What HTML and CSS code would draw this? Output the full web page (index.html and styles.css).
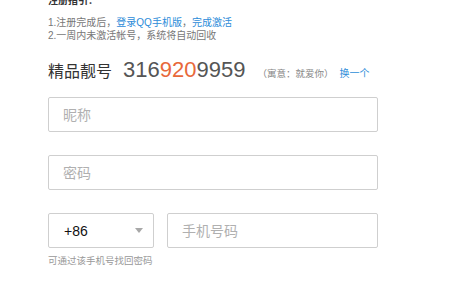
FILE: index.html
```html
<!DOCTYPE html>
<html lang="zh-CN">
<head>
    <meta charset="UTF-8">
    <title>注册</title>
    <link rel="stylesheet" href="styles.css">
</head>
<body>

    <div class="guide">
        <h3>注册指引：</h3>
        <p>1.注册完成后，<a href="#">登录QQ手机版</a>，<a href="#">完成激活</a></p>
        <p>2.一周内未激活帐号，系统将自动回收</p>
    </div>

    <div class="lucky">
        <span class="lucky-title">精品靓号</span>
        <span class="lucky-num">316<em>920</em>9959</span>
        <span class="lucky-tip">（寓意：就爱你）</span>
        <a href="#" class="lucky-change">换一个</a>
    </div>

    <div class="field">
        <input type="text" placeholder="昵称">
    </div>

    <div class="field">
        <input type="password" placeholder="密码">
    </div>

    <div class="field phone">
        <div class="select">
            <span>+86</span>
            <i class="arrow"></i>
        </div>
        <input type="text" class="phone-input" placeholder="手机号码">
    </div>
    <p class="hint">可通过该手机号找回密码</p>

</body>
</html>
```

FILE: styles.css
```css
body {
    font-family: "Liberation Sans", "Noto Sans CJK SC", sans-serif;
    margin: 0;
    padding-left: 48px;
    background: #fff;
    color: #333;
}

a {
    color: #2d8cd9;
    text-decoration: none;
}

.guide {
    margin-top: -6px;
    font-size: 10px;
    line-height: 13px;
    color: #777;
}

.guide h3 {
    margin: 0 0 9px;
    font-size: 10px;
    font-weight: bold;
    color: #333;
}

.guide p {
    margin: 0;
}

.lucky {
    display: flex;
    align-items: baseline;
    margin-top: 15px;
    height: 24px;
}

.lucky-title {
    font-size: 16px;
    color: #333;
}

.lucky-num {
    margin-left: 11px;
    font-size: 22px;
    color: #555;
}

.lucky-num em {
    font-style: normal;
    color: #e8683a;
}

.lucky-tip {
    margin-left: 12px;
    font-size: 9.5px;
    color: #888;
}

.lucky-change {
    margin-left: 6px;
    font-size: 10px;
}

.field {
    margin-top: 16px;
    width: 330px;
}

.field + .field {
    margin-top: 23px;
}

.field input {
    box-sizing: border-box;
    width: 100%;
    height: 35px;
    padding: 0 14px;
    border: 1px solid #cfcfcf;
    border-radius: 2px;
    font-family: inherit;
    font-size: 14px;
    color: #333;
    outline: none;
}

.field input::placeholder {
    color: #b0b0b0;
}

.phone {
    display: flex;
    gap: 13px;
}

.select {
    box-sizing: border-box;
    flex: 0 0 106px;
    height: 35px;
    display: flex;
    align-items: center;
    justify-content: space-between;
    padding: 0 10px 0 15px;
    border: 1px solid #cfcfcf;
    border-radius: 2px;
    font-size: 14px;
    color: #111;
}

.arrow {
    width: 0;
    height: 0;
    border-left: 4px solid transparent;
    border-right: 4px solid transparent;
    border-top: 5px solid #a8a8a8;
}

.phone .phone-input {
    flex: 1;
    width: auto;
}

.hint {
    margin: 5px 0 0;
    font-size: 9.5px;
    color: #999;
}
```
